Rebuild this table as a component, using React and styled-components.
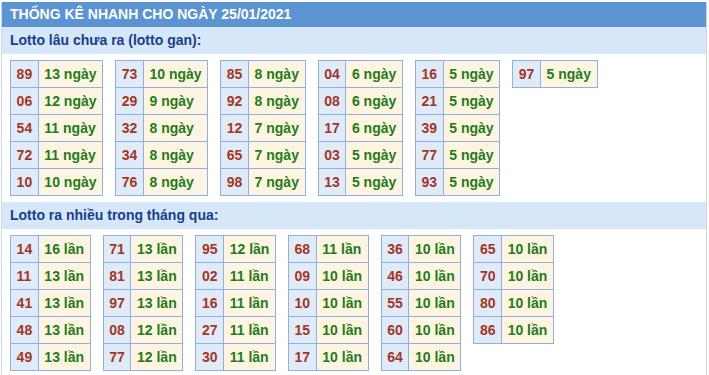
import React from "react";
import styled, { createGlobalStyle } from "styled-components";

const GlobalStyle = createGlobalStyle`
    body {
        margin: 0;
        background: #ffffff;
        font-family: "Liberation Sans", Arial, sans-serif;
    }
`;

const Wrapper = styled.div`
    margin: 2px 2px 0 1px;
    border-left: 1px solid #cdd5df;
    border-right: 1px solid #cdd5df;
`;

const Header = styled.div`
    height: 25px;
    line-height: 25px;
    padding: 0 8px;
    background: #5b93d3;
    color: #ffffff;
    font-size: 14px;
    font-weight: bold;
`;

const SectionTitle = styled.div`
    height: 27px;
    line-height: 27px;
    padding: 0 8px;
    background: #d6e7f9;
    color: #173e8c;
    font-size: 14px;
    font-weight: bold;
`;

const Tables = styled.div`
    display: flex;
    flex-wrap: wrap;
    align-items: flex-start;
    gap: 12px;
    padding: 6px 8px;
`;

const Table = styled.table`
    border-collapse: collapse;
    font-size: 14px;
    font-weight: bold;
`;

const Cell = styled.td`
    height: 26px;
    padding: 0 5.6px;
    border: 1px solid #8fb0e0;
    white-space: nowrap;
    background: ${(p) => (p.$num ? "#e0ebfa" : "#fef4e2")};
    color: ${(p) => (p.$num ? "#a3361f" : "#1e7d18")};
`;

const ganTables = [
    [["89", "13"], ["06", "12"], ["54", "11"], ["72", "11"], ["10", "10"]],
    [["73", "10"], ["29", "9"], ["32", "8"], ["34", "8"], ["76", "8"]],
    [["85", "8"], ["92", "8"], ["12", "7"], ["65", "7"], ["98", "7"]],
    [["04", "6"], ["08", "6"], ["17", "6"], ["03", "5"], ["13", "5"]],
    [["16", "5"], ["21", "5"], ["39", "5"], ["77", "5"], ["93", "5"]],
    [["97", "5"]],
];

const monthTables = [
    [["14", "16"], ["11", "13"], ["41", "13"], ["48", "13"], ["49", "13"]],
    [["71", "13"], ["81", "13"], ["97", "13"], ["08", "12"], ["77", "12"]],
    [["95", "12"], ["02", "11"], ["16", "11"], ["27", "11"], ["30", "11"]],
    [["68", "11"], ["09", "10"], ["10", "10"], ["15", "10"], ["17", "10"]],
    [["36", "10"], ["46", "10"], ["55", "10"], ["60", "10"], ["64", "10"]],
    [["65", "10"], ["70", "10"], ["80", "10"], ["86", "10"]],
];

const StatBlock = ({ rows, unit }) => (
    <Table>
        <tbody>
            {rows.map(([num, count]) => (
                <tr key={num}>
                    <Cell $num>{num}</Cell>
                    <Cell>{count} {unit}</Cell>
                </tr>
            ))}
        </tbody>
    </Table>
);

const App = () => {
    return (
        <>
            <GlobalStyle />
            <Wrapper>
                <Header>THỐNG KÊ NHANH CHO NGÀY 25/01/2021</Header>

                <SectionTitle>Lotto lâu chưa ra (lotto gan):</SectionTitle>
                <Tables>
                    {ganTables.map((rows, i) => (
                        <StatBlock key={i} rows={rows} unit="ngày" />
                    ))}
                </Tables>

                <SectionTitle>Lotto ra nhiều trong tháng qua:</SectionTitle>
                <Tables>
                    {monthTables.map((rows, i) => (
                        <StatBlock key={i} rows={rows} unit="lần" />
                    ))}
                </Tables>
            </Wrapper>
        </>
    );
};

export default App;
